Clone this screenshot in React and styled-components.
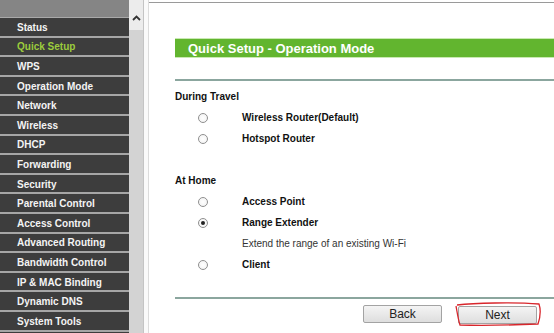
import React from 'react'
import styled, { createGlobalStyle } from 'styled-components'

const GlobalStyle = createGlobalStyle`
  html, body {
    margin: 0;
    padding: 0;
    background: #fff;
  }
  body {
    font-family: "Liberation Sans", Arial, sans-serif;
  }
`

const menuItems = [
  'Status',
  'Quick Setup',
  'WPS',
  'Operation Mode',
  'Network',
  'Wireless',
  'DHCP',
  'Forwarding',
  'Security',
  'Parental Control',
  'Access Control',
  'Advanced Routing',
  'Bandwidth Control',
  'IP & MAC Binding',
  'Dynamic DNS',
  'System Tools',
]

const Page = styled.div`
  display: flex;
  width: 554px;
  height: 333px;
  overflow: hidden;
  background: #fff;
`

const Sidebar = styled.nav`
  width: 129px;
  flex-shrink: 0;
  display: flex;
  flex-direction: column;
  background: #3d3d3d;
`

const SidebarTop = styled.div`
  height: 18px;
  background: #858585;
  border-bottom: 1px solid #a9a9a9;
  box-sizing: border-box;
`

const MenuItem = styled.div`
  height: 19.6px;
  flex-shrink: 0;
  box-sizing: border-box;
  display: flex;
  align-items: center;
  padding-left: 17px;
  padding-top: 1px;
  font-size: 10px;
  font-weight: 700;
  color: ${({ active }) => (active ? '#9ccc3c' : '#f4f4f4')};
  background: #3d3d3d;
  border-bottom: 2px solid #a6a6a6;
  white-space: nowrap;
`

const Scrollbar = styled.div`
  width: 14px;
  flex-shrink: 0;
  display: flex;
  flex-direction: column;
  background: #d3d3d3;
  border-right: 1px solid #c4c4c4;
`

const ScrollArrow = styled.div`
  height: 30px;
  background: #ececec;
  display: flex;
  justify-content: center;
  padding-top: 15px;
  box-sizing: border-box;
`

const Divider = styled.div`
  width: 4px;
  flex-shrink: 0;
  background: #fafafa;
  border-right: 1px solid #dcdcdc;
`

const Content = styled.main`
  flex: 1;
  display: flex;
  flex-direction: column;
  padding-left: 26px;
  position: relative;
`

const TopRule = styled.div`
  position: absolute;
  top: 2px;
  left: 0;
  right: 0;
  height: 1px;
  background: #9a9a9a;
`

const TitleBar = styled.h1`
  margin: 38px 0 0;
  height: 20px;
  box-sizing: border-box;
  background: #62b52f;
  border-top: 1px solid #c9e9b3;
  border-bottom: 1px solid #c9e9b3;
  color: #fff;
  font-size: 13px;
  font-weight: 700;
  padding-left: 13px;
  display: flex;
  align-items: center;
`

const Rule = styled.div`
  height: 2px;
  background: #8ba69e;
  margin-top: ${({ top }) => top}px;
`

const Form = styled.div`
  display: grid;
  grid-template-columns: 23px 44px 1fr;
  grid-auto-rows: 21px;
  margin-top: 5px;
  font-size: 10px;
  color: #111;
`

const SectionTitle = styled.div`
  grid-column: 1 / -1;
  display: flex;
  align-items: center;
  font-weight: 700;
`

const Spacer = styled.div`
  grid-column: 1 / -1;
`

const RadioCell = styled.div`
  grid-column: 2;
  display: flex;
  align-items: center;
`

const Radio = styled.span`
  width: 10px;
  height: 10px;
  border-radius: 50%;
  border: 1px solid #8f8f8f;
  background: radial-gradient(circle, #fff 0%, #f0f0f0 100%);
  box-sizing: border-box;
  display: flex;
  align-items: center;
  justify-content: center;

  &::after {
    content: '';
    width: 4px;
    height: 4px;
    border-radius: 50%;
    background: ${({ checked }) => (checked ? '#222' : 'transparent')};
  }
`

const Label = styled.div`
  grid-column: 3;
  display: flex;
  align-items: center;
  font-weight: ${({ note }) => (note ? 400 : 700)};
  color: ${({ note }) => (note ? '#333' : '#111')};
`

const Buttons = styled.div`
  display: flex;
  justify-content: flex-end;
  gap: 16px;
  padding-right: 17px;
  margin-top: 6px;
`

const ButtonWrap = styled.div`
  position: relative;
`

const Button = styled.button`
  width: 79px;
  height: 18px;
  padding: 0;
  font-family: "Liberation Sans", Arial, sans-serif;
  font-size: 12px;
  color: #222;
  border: 1px solid #a3a3a3;
  border-radius: 2px;
  background: linear-gradient(#f4f4f4, #dedede);
`

const Scribble = styled.svg`
  position: absolute;
  left: -4px;
  top: -3px;
  pointer-events: none;
`

function Option ({ label, checked }) {
  return (
    <>
      <RadioCell>
        <Radio checked={checked} />
      </RadioCell>
      <Label>{label}</Label>
    </>
  )
}

export default function App () {
  return (
    <Page>
      <GlobalStyle />
      <Sidebar>
        <SidebarTop />
        {menuItems.map(item => (
          <MenuItem key={item} active={item === 'Quick Setup'}>
            {item}
          </MenuItem>
        ))}
      </Sidebar>
      <Scrollbar>
        <ScrollArrow>
          <svg width="9" height="6" viewBox="0 0 9 6">
            <path d="M1 5 L4.5 1.5 L8 5" fill="none" stroke="#333" strokeWidth="1.8" />
          </svg>
        </ScrollArrow>
      </Scrollbar>
      <Divider />
      <Content>
        <TopRule />
        <TitleBar>Quick Setup - Operation Mode</TitleBar>
        <Rule top={21} />
        <Form>
          <SectionTitle>During Travel</SectionTitle>
          <Option label="Wireless Router(Default)" />
          <Option label="Hotspot Router" />
          <Spacer />
          <SectionTitle>At Home</SectionTitle>
          <Option label="Access Point" />
          <Option label="Range Extender" checked />
          <Label note>Extend the range of an existing Wi-Fi</Label>
          <Option label="Client" />
        </Form>
        <Rule top={22} />
        <Buttons>
          <Button>Back</Button>
          <ButtonWrap>
            <Button>Next</Button>
            <Scribble width="88" height="25" viewBox="0 0 88 25">
              <path
                d="M3 3 C 20 1, 60 0, 85 2 C 87 8, 86 16, 84 22 C 60 23, 30 24, 6 23 C 4 17, 3 9, 2 4"
                fill="none"
                stroke="#d8262c"
                strokeWidth="1.3"
              />
            </Scribble>
          </ButtonWrap>
        </Buttons>
      </Content>
    </Page>
  )
}
